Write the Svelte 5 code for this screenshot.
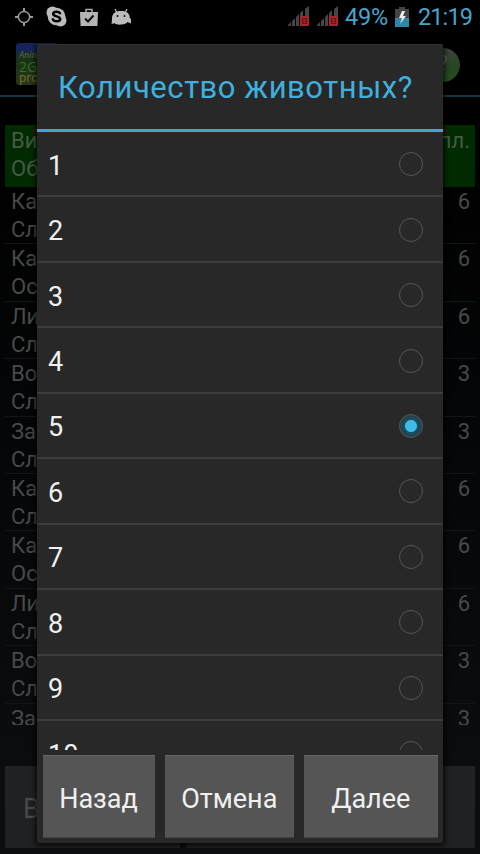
<script lang="ts">
	interface Sighting {
		name: string;
		kind: string;
		count: number;
	}

	const sightings: Sighting[] = [
		{ name: 'Каб', kind: 'Сле', count: 6 },
		{ name: 'Каб', kind: 'Осо', count: 6 },
		{ name: 'Лис', kind: 'Сле', count: 6 },
		{ name: 'Вол', kind: 'Сле', count: 3 },
		{ name: 'Зая', kind: 'Сле', count: 3 },
		{ name: 'Каб', kind: 'Сле', count: 6 },
		{ name: 'Каб', kind: 'Осо', count: 6 },
		{ name: 'Лис', kind: 'Сле', count: 6 },
		{ name: 'Вол', kind: 'Сле', count: 3 },
		{ name: 'Зая', kind: '', count: 3 }
	];

	const options = [1, 2, 3, 4, 5, 6, 7, 8, 9, 10];
	let selected = $state(5);
</script>

{#snippet signal()}
	<svg class="signal" width="23" height="21" viewBox="0 0 23 21">
		<path d="M1 20v-1l3-3v4zM5 20v-5l3-3v8zM9 20v-9l3-3v12zM13 20V7l3-3v16zM18 20V3l4-3v20z" fill="#454545" />
		<rect x="13" y="10" width="9" height="10" rx="2" fill="#a9252b" />
		<path d="M15.500 12.500h4v5h-4zM15.500 15h4" fill="none" stroke="#6b1317" stroke-width="1.200" />
	</svg>
{/snippet}

<div class="screen">
	<header class="status">
		<div class="notifications">
			<svg width="18" height="18" viewBox="0 0 18 18" fill="none" stroke="#9a9a9a">
				<circle cx="9" cy="9" r="5.600" stroke-width="1.500" />
				<path d="M9 0v4M9 14v4M0 9h4M14 9h4" stroke-width="2" />
			</svg>
			<svg width="21" height="21" viewBox="0 0 21 21">
				<circle cx="6.500" cy="6.500" r="6" fill="#bdbdbd" />
				<circle cx="14.500" cy="14.500" r="6" fill="#bdbdbd" />
				<circle cx="10.500" cy="10.500" r="8.800" fill="#bdbdbd" />
				<path d="M14 7.300C13 5.200 7.200 5 7.200 7.900c0 3 7 1.900 7 5.100 0 3.200-6.700 3-7.400.3" fill="none" stroke="#000" stroke-width="2.500" stroke-linecap="round" />
			</svg>
			<svg width="18" height="18" viewBox="0 0 18 18">
				<path d="M6 4V1.500h6V4" fill="none" stroke="#aaa" stroke-width="1.500" />
				<path d="M0 4h18l-.6 14H.6z" fill="#b5b5b5" />
				<path d="M5 10.500l3 3 5.500-6" fill="none" stroke="#111" stroke-width="2" />
			</svg>
			<svg width="20" height="16" viewBox="0 0 20 16">
				<path d="M4 0l2 4M16 0l-2 4" stroke="#bbb" stroke-width="1.300" />
				<path d="M1 11C.5 5 4 2 10 2s9 3 8.700 7l1.300 1v4.500L16.500 13c-1.500 3-11 3.500-13 1.300L.5 15z" fill="#bbb" />
				<circle cx="6.500" cy="7" r="1" fill="#111" />
				<circle cx="13.500" cy="7" r="1" fill="#111" />
			</svg>
		</div>
		<div class="system">
			{@render signal()}
			{@render signal()}
			<span class="percent">49%</span>
			<svg class="battery" width="14" height="20" viewBox="0 0 14 20">
				<path d="M4 0h6v2h4v18H0V2h4z" fill="#444" />
				<path d="M0 11h14v9H0z" fill="#2f86a8" />
				<path d="M7 4L4 11h3l-2 6 6-8H8l2-5z" fill="#eee" />
			</svg>
			<span class="clock">21:19</span>
		</div>
	</header>

	<div class="app-bar">
		<div class="logo"><span>Anim</span><b>2G</b><i>pro</i></div>
		<div class="orb">?</div>
	</div>

	<div class="sightings">
		<div class="row heading">
			<div>Вид<br />Обр</div>
			<div>пл.</div>
		</div>
		{#each sightings as item}
			<div class="row">
				<div>{item.name}<br />{item.kind}</div>
				<div>{item.count}</div>
			</div>
		{/each}
	</div>

	<div class="footer">
		<div class="footer-btn first">В</div>
		<div class="footer-btn"></div>
	</div>

	<div class="dialog">
		<h1>Количество животных?</h1>
		<div class="options">
			{#each options as n}
				<button class="option" onclick={() => (selected = n)}>
					<span>{n}</span>
					<span class="radio" class:checked={selected === n}></span>
				</button>
			{/each}
		</div>
		<div class="actions">
			<button class="back">Назад</button>
			<button class="cancel">Отмена</button>
			<button class="next">Далее</button>
		</div>
	</div>
</div>

<style>
	:global(body) {
		background: #000;
	}

	.screen {
		position: relative;
		display: flex;
		flex-direction: column;
		width: 480px;
		height: 854px;
		overflow: hidden;
		background: linear-gradient(#000 15%, #040506 45%, #0d0e10 100%);
		font-family: Roboto, sans-serif;
		color: #48494a;
	}

	.status {
		display: flex;
		justify-content: space-between;
		height: 35px;
		box-sizing: border-box;
		padding: 6px 8px 0 15px;
		background: #000;
	}

	.notifications {
		display: flex;
		align-items: center;
		gap: 13px;
		height: 21px;
	}

	.system {
		display: flex;
		align-items: center;
		height: 21px;
		color: #46a5cc;
		font-size: 23.500px;
	}

	.signal {
		margin-right: 6px;
	}

	.percent {
		width: 44px;
		margin: 1px 6px 0 0;
		letter-spacing: -0.2px;
	}

	.battery {
		margin-right: 9px;
	}

	.clock {
		width: 54px;
		margin-top: 1px;
		letter-spacing: -0.9px;
	}

	.app-bar {
		display: flex;
		justify-content: space-between;
		height: 62px;
		box-sizing: border-box;
		padding: 8px 20px 0 16px;
		border-bottom: 2px solid #12394a;
	}

	.logo {
		display: flex;
		flex-direction: column;
		width: 42px;
		height: 42px;
		box-sizing: border-box;
		padding: 7px 0 0 3px;
		border-radius: 3px;
		background: linear-gradient(#14245a 15%, #173414 40%, #29351c);
		font: 9px/10px 'Open Sans', sans-serif;
		color: #686b1c;
	}

	.logo span {
		font-style: italic;
	}

	.logo b {
		font-size: 14px;
		font-weight: 400;
		line-height: 13px;
		color: #34701f;
	}

	.logo i {
		font-size: 12px;
		line-height: 10px;
		font-style: normal;
		color: #77722c;
	}

	.orb {
		width: 34px;
		height: 34px;
		margin-top: 5px;
		border-radius: 50%;
		background: linear-gradient(#3d443d, #254620 60%, #24501d);
		font-size: 20px;
		line-height: 31px;
		text-align: center;
		color: #5c635c;
	}

	.sightings {
		height: 600px;
		box-sizing: border-box;
		margin: 28px 5px 0;
		overflow: hidden;
		font-size: 22px;
		line-height: 28px;
	}

	.row {
		display: flex;
		justify-content: space-between;
		height: 57.400px;
		box-sizing: border-box;
		padding: 1px 5px 0 6px;
		border-bottom: 1px solid #141516;
	}

	.heading {
		height: 62px;
		padding-top: 2px;
		border: 0;
		background: #002b00;
		color: #455a45;
	}

	.footer {
		display: flex;
		gap: 7px;
		margin: 41px 5px 0;
	}

	.footer-btn {
		flex: 1;
		height: 82px;
		background: #202123;
		font-size: 27px;
		line-height: 86px;
	}

	.first {
		flex: 0 0 157px;
		padding-left: 18px;
	}

	.dialog {
		position: absolute;
		top: 44px;
		left: 37px;
		display: flex;
		flex-direction: column;
		width: 406px;
		height: 799px;
		box-sizing: border-box;
		border-top: 1px solid #323232;
		border-radius: 2px;
		background: #282828;
		box-shadow: 0 1px 5px 2px rgba(0, 0, 0, 0.7);
	}

	h1 {
		height: 87px;
		box-sizing: border-box;
		margin: 0;
		padding-left: 21px;
		border-bottom: 3px solid #43a7cb;
		font-size: 31px;
		font-weight: 400;
		line-height: 85px;
		letter-spacing: 0.55px;
		white-space: nowrap;
		color: #3fb0dd;
	}

	.options {
		height: 618px;
		overflow: hidden;
	}

	button {
		border: 0;
		border-radius: 0;
		font-family: inherit;
		color: #f0f0f0;
	}

	.option {
		display: flex;
		align-items: center;
		justify-content: space-between;
		width: 100%;
		height: 65.450px;
		box-sizing: border-box;
		padding: 4px 20px 0 11px;
		border-bottom: 2px solid #3c3c3c;
		background: none;
		font-size: 27px;
	}

	.radio {
		width: 24px;
		height: 24px;
		box-sizing: border-box;
		margin-bottom: 3px;
		border: 1.500px solid #565656;
		border-radius: 50%;
	}

	.checked {
		background: radial-gradient(circle, #3fbbe9 5.500px, #165064 6.500px, #24424c 10px);
	}

	.actions {
		display: flex;
		gap: 10.500px;
		padding: 5px 5.500px 0;
	}

	.actions button {
		height: 83px;
		padding: 4px 0 0;
		border-top: 1px solid #686868;
		border-bottom: 1px solid #444;
		background: #555;
		font-size: 27px;
	}

	.back {
		width: 112px;
	}

	.cancel {
		width: 128.500px;
	}

	.next {
		width: 133.500px;
	}
</style>
